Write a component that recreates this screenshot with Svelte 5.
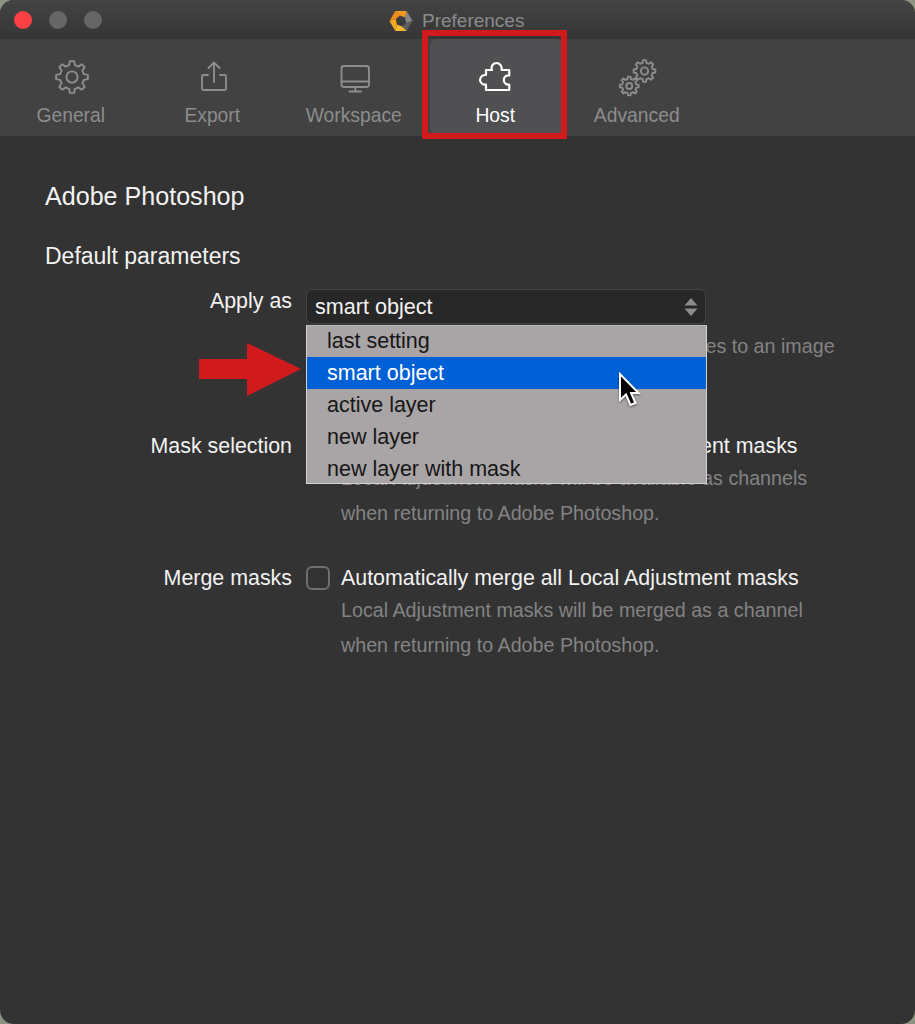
<script lang="ts">
	const options = ['last setting', 'smart object', 'active layer', 'new layer', 'new layer with mask'];
	const tabs = ['General', 'Export', 'Workspace', 'Host', 'Advanced'];

	// gear outline with rounded-off teeth, stroked rather than filled
	function gear(cx: number, cy: number, outer: number, inner: number, teeth = 8) {
		const pts: string[] = [];
		const step = (Math.PI * 2) / teeth;
		for (let i = 0; i < teeth; i++) {
			const a = i * step - Math.PI / 2;
			const corners = [
				[inner, a - step * 0.3],
				[outer, a - step * 0.17],
				[outer, a + step * 0.17],
				[inner, a + step * 0.3]
			];
			for (const [r, t] of corners) {
				pts.push(`${(cx + r * Math.cos(t)).toFixed(2)} ${(cy + r * Math.sin(t)).toFixed(2)}`);
			}
		}
		return 'M' + pts.join('L') + 'Z';
	}
</script>

<div class="window">
	<header class="titlebar">
		<div class="lights">
			<span class="light red"></span>
			<span class="light"></span>
			<span class="light"></span>
		</div>
		<div class="title">
			<svg class="logo" viewBox="0 0 24 24" width="24" height="24">
				<polygon points="6.250,2.040 17.750,2.040 16.210,8.460 11.040,6.580" fill="#f59a1e" />
				<polygon points="17.750,2.040 23.500,12 17.170,13.880 16.210,8.460" fill="#85858a" />
				<polygon points="23.500,12 17.750,21.960 12.960,17.420 17.170,13.880" fill="#5d5d62" />
				<polygon points="17.750,21.960 6.250,21.960 7.790,15.540 12.960,17.420" fill="#f9b92e" />
				<polygon points="6.250,21.960 0.500,12 6.830,10.120 7.790,15.540" fill="#f6a821" />
				<polygon points="0.500,12 6.250,2.040 11.040,6.580 6.830,10.120" fill="#ee8c1c" />
			</svg>
			<span>Preferences</span>
		</div>
	</header>

	<nav class="toolbar">
		{#each tabs as tab}
			<div class="tab" class:active={tab === 'Host'}>
				<svg class="icon" viewBox="0 0 60 44" width="60" height="44">
					{#if tab === 'General'}
						<path d={gear(31, 23, 16, 12.2)} />
						<circle cx="31" cy="23" r="5.6" />
					{:else if tab === 'Export'}
						<path d="M26 21 H21.500 Q20 21 20 22.500 V34.500 Q20 36 21.500 36 H42.500 Q44 36 44 34.500 V22.500 Q44 21 42.500 21 H38" />
						<path d="M32 28 V8.500 M26.500 14 L32 8.500 L37.500 14" />
					{:else if tab === 'Workspace'}
						<rect x="17.500" y="12" width="27.500" height="21" rx="2.500" />
						<path d="M17.500 27.500 H45 M31.250 33 V37 M25.500 37.500 H37" />
					{:else if tab === 'Host'}
						<path d="M21 36 H44.250 V30.500 C41.250 31 38.750 29 38.750 26 C38.750 23 41.250 21 44.250 21.500 V16 H36.500 C37.500 12 34.500 9 31.500 9 C28.500 9 25.500 12 27 16 H21 V21 C18 20.500 15 23 15 26 C15 29 18 31 21 30.500 Z" />
					{:else}
						<path d={gear(37.500, 17, 11, 8.400)} />
						<circle cx="37.500" cy="17" r="3.600" />
						<path d={gear(22.250, 32, 9.500, 7.200)} />
						<circle cx="22.250" cy="32" r="3" />
					{/if}
				</svg>
				<span>{tab}</span>
			</div>
		{/each}
		<div class="highlight"></div>
	</nav>

	<main class="content">
		<h1>Adobe Photoshop</h1>
		<h2>Default parameters</h2>

		<section class="row apply">
			<div class="label">Apply as</div>
			<div class="control">
				<div class="select">
					<span>smart object</span>
					<svg viewBox="0 0 14 20" width="14" height="20">
						<polygon points="7,1 13.500,8.500 0.500,8.500" />
						<polygon points="7,19 13.500,11.500 0.500,11.500" />
					</svg>
				</div>
				<p class="hint first">Embeds the output and keeps your changes to an image</p>
				<ul class="menu">
					{#each options as option}
						<li class:selected={option === 'smart object'}>{option}</li>
					{/each}
				</ul>
				<svg class="arrow" viewBox="0 0 102 54" width="102" height="54">
					<polygon points="0,16 48,16 48,0 102,26 48,53 48,36 0,36" />
				</svg>
				<svg class="cursor" viewBox="0 0 24 36" width="24" height="36">
					<path d="M2 2 V28 L8 22.500 L12.500 33 L17.500 31 L13 21 H20.500 Z" />
				</svg>
			</div>
		</section>

		<section class="row mask">
			<div class="label">Mask selection</div>
			<div class="control">
				<label class="check">
					<span class="box"></span>
					<span>Automatically export all Local Adjustment masks</span>
				</label>
				<p class="hint">Local Adjustment masks will be available as channels</p>
				<p class="hint">when returning to Adobe Photoshop.</p>
			</div>
		</section>

		<section class="row merge">
			<div class="label">Merge masks</div>
			<div class="control">
				<label class="check">
					<span class="box"></span>
					<span>Automatically merge all Local Adjustment masks</span>
				</label>
				<p class="hint">Local Adjustment masks will be merged as a channel</p>
				<p class="hint">when returning to Adobe Photoshop.</p>
			</div>
		</section>
	</main>
</div>

<style>
	:global(body) {
		background: #8a9480;
	}

	.window {
		width: 915px;
		height: 1024px;
		box-sizing: border-box;
		display: flex;
		flex-direction: column;
		background: #333333;
		border-radius: 14px;
		overflow: hidden;
		font-family: 'Liberation Sans', Arial, sans-serif;
		color: #f2f2f2;
	}

	.titlebar {
		height: 39px;
		flex: none;
		display: flex;
		align-items: center;
		position: relative;
		background: linear-gradient(#444444, #353535);
	}

	.lights {
		display: flex;
		gap: 17px;
		padding: 0 0 0 14px;
		margin-top: 1px;
	}

	.light {
		width: 18px;
		height: 18px;
		border-radius: 50%;
		background: #666666;
	}

	.light.red {
		background: #fb4045;
	}

	.title {
		position: absolute;
		left: 389px;
		top: 7px;
		display: flex;
		align-items: center;
		gap: 9px;
		font-size: 19px;
		color: #8b8b8b;
		line-height: 26px;
	}

	.title span {
		margin-top: 1px;
	}

	.toolbar {
		height: 97px;
		flex: none;
		display: flex;
		position: relative;
		background: #424242;
	}

	.tab {
		width: 141.500px;
		display: flex;
		flex-direction: column;
		align-items: center;
		font-size: 19.300px;
		line-height: 22px;
		color: #8d8d8d;
		position: relative;
	}

	.tab.active {
		color: #ffffff;
	}

	.tab.active::before {
		content: '';
		position: absolute;
		left: 5px;
		right: 4px;
		top: 0;
		bottom: 2px;
		background: #505052;
		border-radius: 6px;
	}

	.tab > * {
		position: relative;
	}

	.tab span {
		margin-top: 7px;
	}

	.icon {
		margin-top: 15px;
		fill: none;
		stroke: #8d8d8d;
		stroke-width: 1.900;
		stroke-linejoin: round;
		stroke-linecap: round;
	}

	.tab.active .icon {
		stroke: #ffffff;
		stroke-width: 2.200;
	}

	.highlight {
		position: absolute;
		left: 422px;
		top: -9px;
		width: 145px;
		height: 109px;
		box-sizing: border-box;
		border: 6px solid #d01a1b;
	}

	.content {
		flex: 1;
		padding: 46px 0 0 45px;
	}

	h1 {
		margin: 0;
		font-size: 25.100px;
		line-height: 28px;
		font-weight: 400;
	}

	h2 {
		margin: 33px 0 0;
		font-size: 23px;
		line-height: 26px;
		font-weight: 400;
	}

	.row {
		display: flex;
		font-size: 21.400px;
	}

	.apply {
		margin-top: 19px;
	}

	.apply .control {
		z-index: 2;
	}

	.mask {
		margin-top: 50px;
	}

	.merge {
		margin-top: 35px;
	}

	.label {
		width: 247px;
		margin-right: 14px;
		flex: none;
		text-align: right;
		line-height: 26px;
	}

	.control {
		position: relative;
		width: 520px;
	}

	.select {
		width: 400px;
		height: 35px;
		box-sizing: border-box;
		margin-top: 1px;
		padding: 0 8px;
		display: flex;
		align-items: center;
		justify-content: space-between;
		background: #272727;
		border: 1px solid #454545;
		border-radius: 6px;
		font-size: 21.600px;
	}

	.select svg {
		fill: #8b8b8b;
		margin-right: -1px;
	}

	.check {
		display: flex;
		align-items: center;
		height: 26px;
		gap: 11px;
		margin-bottom: 2px;
		white-space: nowrap;
	}

	.box {
		width: 24px;
		height: 24px;
		box-sizing: border-box;
		border: 2px solid #6f6f6f;
		border-radius: 6px;
	}

	.hint {
		margin: 0;
		padding-left: 35px;
		font-size: 19.700px;
		line-height: 34.500px;
		color: #838383;
		white-space: nowrap;
	}

	.hint.first {
		margin-top: 5px;
		height: 54px;
	}

	.menu {
		position: absolute;
		left: 0;
		top: 37px;
		width: 401px;
		height: 159px;
		box-sizing: border-box;
		margin: 0;
		padding: 0;
		overflow: hidden;
		list-style: none;
		background: #a9a5a6;
		border: 1px solid #d2d0d0;
		border-top-color: #bdbbbb;
		color: #161616;
		font-size: 21.500px;
	}

	.menu li {
		height: 32px;
		line-height: 33px;
		padding-left: 20px;
	}

	.menu li:first-child {
		margin-top: -1px;
	}

	.menu li.selected {
		background: #0060d5;
		color: #ffffff;
	}

	.arrow {
		position: absolute;
		left: -107px;
		top: 55px;
		fill: #d01a1b;
	}

	.cursor {
		position: absolute;
		left: 312px;
		top: 84px;
		fill: #000000;
		stroke: #ffffff;
		stroke-width: 2;
		filter: drop-shadow(0 1px 1px rgba(0, 0, 0, 0.5));
	}
</style>
